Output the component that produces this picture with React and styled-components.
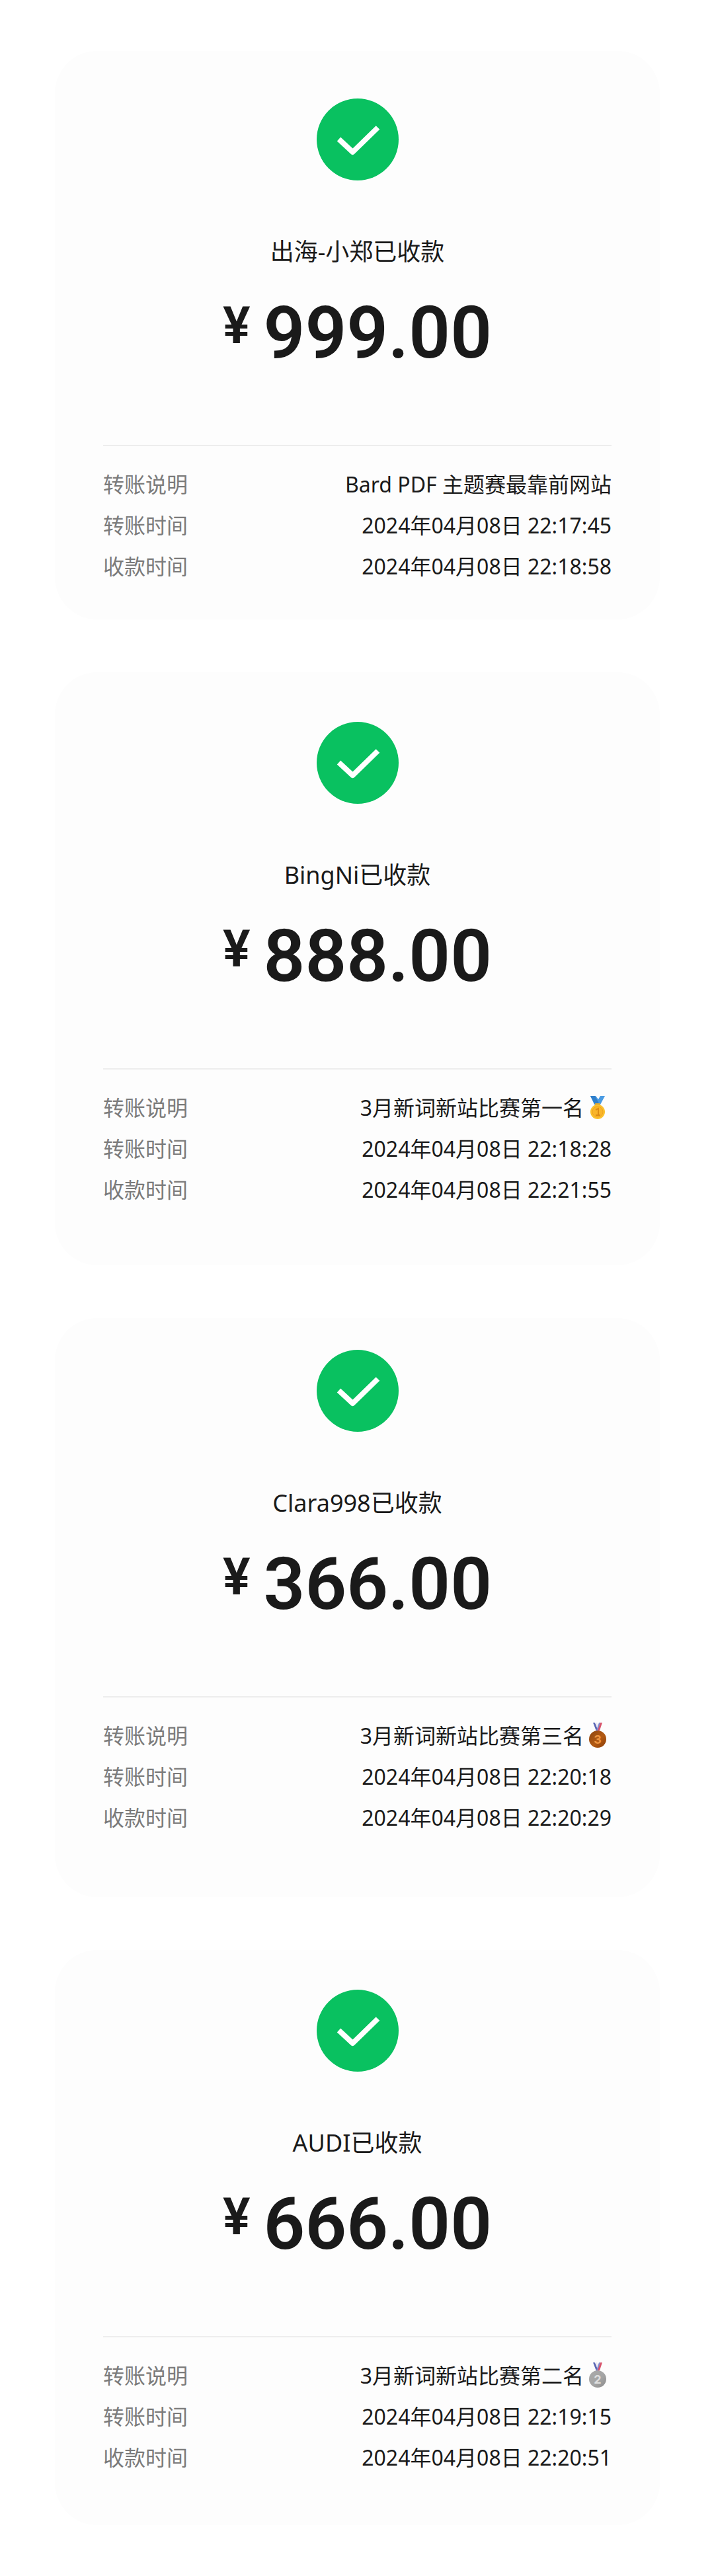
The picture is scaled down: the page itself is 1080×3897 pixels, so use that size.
import React from "react";
import styled, { createGlobalStyle } from "styled-components";

const GlobalStyle = createGlobalStyle`
  * { box-sizing: border-box; }
  body {
    margin: 0;
    background: #ffffff;
    color: #1a1a1a;
    font-family: "Noto Sans", "Noto Sans CJK SC", sans-serif;
  }
`;

const Page = styled.main`
  display: flex;
  flex-direction: column;
  gap: 80px;
  padding: 77px 82px 77px 83px;
`;

const Card = styled.article`
  display: flex;
  flex-direction: column;
  align-items: center;
  padding: ${(p) => p.$top}px 73px ${(p) => p.$bottom}px;
  border-radius: 64px;
  background: #fdfdfd;
`;

const StatusIcon = styled.svg`
  display: block;
  width: 124px;
  height: 124px;
`;

const Payee = styled.h2`
  margin: 84px 0 0;
  font-size: 36px;
  line-height: 48px;
  font-weight: 400;
  text-align: center;
`;

const Amount = styled.p`
  display: flex;
  align-items: flex-start;
  gap: 20px;
  margin: 44px 0 0;
  font-family: Roboto, "Noto Sans", sans-serif;
  font-weight: 600;
`;

const Currency = styled.span`
  font-size: 78px;
  line-height: 88px;
`;

const Figure = styled.span`
  font-size: 110px;
  line-height: 110px;
`;

const Details = styled.dl`
  align-self: stretch;
  display: flex;
  flex-direction: column;
  gap: 14px;
  margin: 114px 0 0;
  padding-top: 34px;
  border-top: 2px solid #ededed;
`;

const Row = styled.div`
  display: flex;
  justify-content: space-between;
  font-size: 32px;
  line-height: 48px;
`;

const Label = styled.dt`
  color: #7b7b7b;
`;

const Value = styled.dd`
  display: flex;
  align-items: center;
  margin: 0;
`;

const MedalIcon = styled.svg`
  display: block;
  width: 42px;
  height: 42px;
`;

const MedalDigit = styled.text`
  font-family: Inter, sans-serif;
  font-size: 18px;
  font-weight: 700;
  text-anchor: middle;
`;

function GoldMedal() {
  return (
    <MedalIcon viewBox="0 0 42 42" role="img" aria-label="金牌">
      <path d="M10 3h8l4 5 3-5h7l-7 13h-9z" fill="#4a9be3" />
      <path d="M10 3h7l7 13h-7z" fill="#2f7fcb" />
      <rect x="17" y="14" width="8" height="4" rx="1" fill="#d9a83b" />
      <circle cx="21" cy="27" r="11" fill="#fbc02d" />
      <circle cx="21" cy="27" r="8" fill="#f9b52a" stroke="#f0a31f" strokeWidth="1" />
      <path d="M18 24l4-2v10M18 32h7" fill="none" stroke="#dd8c14" strokeWidth="2" />
    </MedalIcon>
  );
}

function RankMedal({ rank, label, light, mid, dark, ink }) {
  const id = `medal-${rank}`;
  return (
    <MedalIcon viewBox="0 0 42 42" role="img" aria-label={label}>
      <defs>
        <linearGradient id={id} x1="0" y1="0" x2="1" y2="1">
          <stop offset="0" stopColor={dark} />
          <stop offset="0.55" stopColor={mid} />
          <stop offset="1" stopColor={light} />
        </linearGradient>
      </defs>
      <path d="M14 1h3l6 13h-4z" fill="#5a67b4" />
      <path d="M17 1h3l4 11-2 2z" fill="#eeeaf4" />
      <path d="M25 1h3l-4 12h-4z" fill="#d9546b" />
      <path d="M23 1h2l-4 12h-2z" fill="#8288cc" />
      <circle cx="21" cy="26" r="13" fill={`url(#${id})`} />
      <MedalDigit x="21" y="33" fill={ink}>{rank}</MedalDigit>
    </MedalIcon>
  );
}

const medals = {
  1: <GoldMedal />,
  2: <RankMedal rank={2} label="银牌" light="#8b8b8b" mid="#a5a5a5" dark="#a9a9a9" ink="#dedede" />,
  3: <RankMedal rank={3} label="铜牌" light="#8a3c06" mid="#b35a12" dark="#8c4410" ink="#ee9440" />,
};

const receipts = [
  {
    name: "出海-小郑", amount: "999.00", note: "Bard PDF 主题赛最靠前网站",
    sent: "22:17:45", received: "22:18:58", top: 72, bottom: 56,
  },
  {
    name: "BingNi", amount: "888.00", note: "3月新词新站比赛第一名", medal: 1,
    sent: "22:18:28", received: "22:21:55", top: 75, bottom: 90,
  },
  {
    name: "Clara998", amount: "366.00", note: "3月新词新站比赛第三名", medal: 3,
    sent: "22:20:18", received: "22:20:29", top: 48, bottom: 96,
  },
  {
    name: "AUDI", amount: "666.00", note: "3月新词新站比赛第二名", medal: 2,
    sent: "22:19:15", received: "22:20:51", top: 60, bottom: 78,
  },
];

function Receipt({ name, amount, note, medal, sent, received, top, bottom }) {
  return (
    <Card $top={top} $bottom={bottom}>
      <StatusIcon viewBox="0 0 124 124" aria-hidden="true">
        <circle cx="62" cy="62" r="62" fill="#09c160" />
        <path
          d="M33.5 61.5L54.5 81L92.5 44"
          fill="none"
          stroke="#ffffff"
          strokeWidth="8"
          strokeLinejoin="round"
        />
      </StatusIcon>
      <Payee>{name}已收款</Payee>
      <Amount>
        <Currency>¥</Currency>
        <Figure>{amount}</Figure>
      </Amount>
      <Details>
        <Row>
          <Label>转账说明</Label>
          <Value>{note}{medals[medal]}</Value>
        </Row>
        <Row>
          <Label>转账时间</Label>
          <Value>2024年04月08日 {sent}</Value>
        </Row>
        <Row>
          <Label>收款时间</Label>
          <Value>2024年04月08日 {received}</Value>
        </Row>
      </Details>
    </Card>
  );
}

export default function App() {
  return (
    <>
      <GlobalStyle />
      <Page>
        {receipts.map((receipt) => (
          <Receipt key={receipt.name} {...receipt} />
        ))}
      </Page>
    </>
  );
}
